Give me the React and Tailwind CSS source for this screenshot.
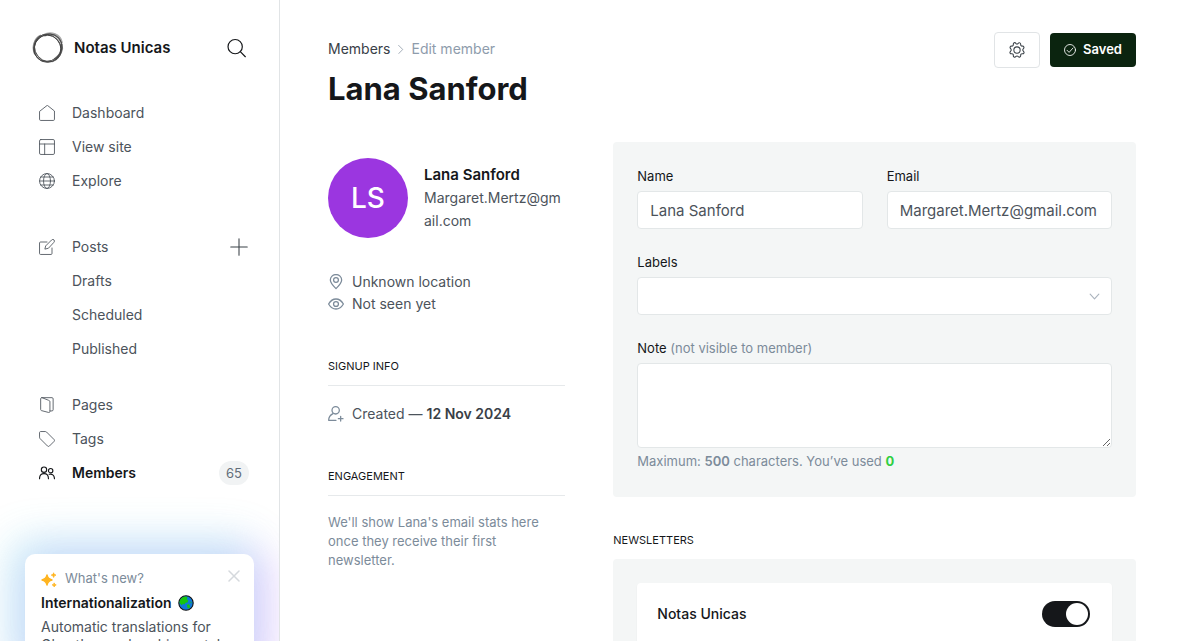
import React from "react";

function Icon({ children, className, width = 1.5 }) {
  return (
    <svg
      viewBox="0 0 24 24"
      fill="none"
      stroke="currentColor"
      strokeWidth={width}
      strokeLinecap="round"
      strokeLinejoin="round"
      aria-hidden="true"
      className={className}
    >
      {children}
    </svg>
  );
}

const icons = {
  home: <path d="M12 .8 .8 9.6v11.9c0 1 .7 1.7 1.7 1.7h19c1 0 1.7-.7 1.7-1.7V9.6z" />,
  layout: (
    <>
      <rect x=".8" y=".8" width="22.4" height="22.4" rx="2" />
      <path d="M.8 7.5h22.4M8.5 7.5v15.7" />
    </>
  ),
  globe: (
    <>
      <circle cx="12" cy="12" r="11.2" />
      <ellipse cx="12" cy="12" rx="5.2" ry="11.2" />
      <path d="M.8 12h22.4M2.6 6h18.8M2.6 18h18.8" />
    </>
  ),
  edit: (
    <>
      <path d="M12 4.5H2.3C1.4 4.5.8 5.1.8 6v15.7c0 .9.6 1.5 1.5 1.5H18c.9 0 1.5-.6 1.5-1.5V13.5" />
      <path d="m13.6 14-4.8 1.2 1.2-4.8 9-9a2.4 2.4 0 0 1 3.5 3.5z" />
    </>
  ),
  pages: (
    <>
      <path d="M4 1h15.5c1 0 1.7.7 1.7 1.7v16.5c0 1-.7 1.7-1.7 1.7h-3" />
      <path d="M4 1C3 1 2.5 1.7 2.5 2.6v16.2c0 .8.4 1.3 1.2 1.6l10.7 2.8c1.2.3 2-.3 2-1.4V7c0-.9-.5-1.5-1.3-1.8z" />
    </>
  ),
  tag: <path d="M.8 2.3C.8 1.4 1.4.8 2.3.8h7.2c.7 0 1.3.3 1.8.7l11.3 11.3c.8.8.8 2 0 2.8l-7 7c-.8.8-2 .8-2.8 0L1.5 11.3a2.5 2.5 0 0 1-.7-1.8z" />,
  members: (
    <>
      <circle cx="7.5" cy="7" r="4" />
      <path d="M.8 20.5c0-4.5 2.8-7.5 6.7-7.5s6.7 3 6.7 7.5" />
      <circle cx="17.5" cy="8.5" r="3.3" />
      <path d="M15.2 14c4.2-1.3 8 1.5 8 6.5" />
    </>
  ),
};

function NavItem({ icon, label, active, children }) {
  return (
    <li className="flex h-[34px] items-center justify-between">
      <a
        href="#"
        className={
          active
            ? "flex items-center gap-[17px] text-sm font-semibold text-[#15171a]"
            : "flex items-center gap-[17px] text-sm text-[#4c535b]"
        }
      >
        <span className="size-4">
          {icon && <Icon className="size-4" width={active ? 1.7 : 1.3}>{icons[icon]}</Icon>}
        </span>
        {label}
      </a>
      {children}
    </li>
  );
}

function Logo() {
  return (
    <svg viewBox="0 0 32 32" fill="none" stroke="#444" className="size-8" aria-hidden="true">
      <path d="M12 3.500C19-.5 28 3 29.500 11" stroke="#aaa" strokeWidth="3" />
      <path d="M29.500 12c1.500 6-1.500 12-7 15.500" stroke="#888" strokeWidth="2.500" />
      <path d="M3 22C0 15 2 7 9 3.500" stroke="#888" strokeWidth="2" />
      <circle cx="15.300" cy="16.700" r="13.600" strokeWidth="1" />
      <ellipse cx="16.200" cy="15.800" rx="14.600" ry="13" strokeWidth=".9" transform="rotate(-40 16 16)" />
      <ellipse cx="16" cy="16.300" rx="14.500" ry="12.600" strokeWidth=".8" transform="rotate(50 16 16)" />
      <ellipse cx="16.300" cy="15.600" rx="13.800" ry="14" strokeWidth=".5" />
    </svg>
  );
}

function Globe() {
  return (
    <svg viewBox="0 0 16 16" className="size-4" role="img" aria-label="Globe">
      <circle cx="8" cy="8" r="7.200" fill="#0f78d8" stroke="#111" strokeWidth="1.100" />
      <path d="M1.500 8C1.500 4.500 4 1.700 8 1.600l1.500 1-.8 1.600 1.600 1.300-.8 2-2 .2-.9 1.800-1.700-.7-1 1.400z" fill="#16c60c" />
      <path d="m8.800 9.800 2-.6 1.400 1.900-.8 2.300-1.900-.4zM12 6.200l1.700 1.400-.7 1z" fill="#16c60c" />
    </svg>
  );
}

function Sidebar() {
  return (
    <aside className="flex w-[280px] shrink-0 flex-col overflow-hidden border-r border-[#e1e4e6]">
      <div className="flex items-center pt-8 pr-[31px] pl-8">
        <Logo />
        <a href="#" className="ml-[10px] text-[15px] leading-8 font-semibold text-[#15171a]">
          Notas Unicas
        </a>
        <button type="button" aria-label="Search" className="ml-auto text-[#15171a]">
          <Icon className="size-[22px]" width={1.3}>
            <circle cx="10" cy="10.500" r="7.800" />
            <path d="m15.600 16 5.500 5.500" />
          </Icon>
        </button>
      </div>
      <nav className="mt-8 flex flex-col pr-[31px] pl-[39px]">
        <ul>
          <NavItem icon="home" label="Dashboard" />
          <NavItem icon="layout" label="View site" />
          <NavItem icon="globe" label="Explore" />
        </ul>
        <ul className="mt-8">
          <NavItem icon="edit" label="Posts">
            <button type="button" aria-label="New post" className="text-[#394047]">
              <Icon className="size-[18px]" width={1.4}>
                <path d="M12 1v22M1 12h22" />
              </Icon>
            </button>
          </NavItem>
          <NavItem label="Drafts" />
          <NavItem label="Scheduled" />
          <NavItem label="Published" />
        </ul>
        <ul className="mt-[22px]">
          <NavItem icon="pages" label="Pages" />
          <NavItem icon="tag" label="Tags" />
          <NavItem icon="members" label="Members" active>
            <span className="-mr-px rounded-full bg-[#f1f3f4] px-[7px] text-[13px] leading-6 text-[#626d79]">65</span>
          </NavItem>
        </ul>
      </nav>
      <section className="mx-[25px] mt-16 shrink-0 rounded-[10px] bg-white py-4 pr-3.5 pl-4 text-sm shadow-[-7px_-6px_42px_8px_rgb(75_225_226/28%),7px_6px_42px_8px_rgb(202_103_255/32%)]">
        <div className="flex h-4 items-center text-[13px] text-[#7c8b9a]">
          <svg viewBox="0 0 16 16" fill="#ffb41f" stroke="#ffb41f" strokeLinejoin="round" className="mt-1 mr-2 size-4" aria-hidden="true">
            <path d="M6 3c.7 3.300 1.900 4.300 5 5-3.100.7-4.300 1.900-5 5-.7-3.100-1.900-4.300-5-5 3.100-.7 4.300-1.700 5-5z" strokeWidth="1.400" />
            <path d="M12.600.8c.4 1.500.9 2 2.300 2.300-1.400.4-1.900.9-2.300 2.300-.4-1.400-.9-1.900-2.300-2.300 1.400-.3 1.900-.8 2.300-2.300zM13.200 10.900c.3 1.300.8 1.700 2 2-1.200.3-1.700.8-2 2-.3-1.200-.8-1.700-2-2 1.200-.3 1.700-.7 2-2z" strokeWidth=".9" />
          </svg>
          <span className="pt-px">What's new?</span>
          <button type="button" aria-label="Close" className="ml-auto self-start text-[#d5d9dd]">
            <Icon className="size-3" width={3}>
              <path d="m2 2 20 20M22 2 2 22" />
            </Icon>
          </button>
        </div>
        <h2 className="mt-[5px] flex items-center gap-1.5 leading-6 font-semibold text-[#15171a]">
          Internationalization <Globe />
        </h2>
        <p className="mt-[3px] leading-[18px] text-[#4c535b]">
          Automatic translations for Ghost's membership portal
        </p>
      </section>
    </aside>
  );
}

function SectionTitle({ children }) {
  return (
    <h3 className="border-b border-[#e6e9eb] pb-[9px] text-[11px] leading-5 font-normal text-[#15171a] uppercase">
      {children}
    </h3>
  );
}

function MetaLine({ icon, children }) {
  return (
    <p className="flex items-center gap-2 text-sm leading-[22px] text-[#4c535b]">
      <Icon className="size-4 text-[#7c8b9a]" width={1.9}>{icon}</Icon>
      <span>{children}</span>
    </p>
  );
}

function Profile() {
  return (
    <div className="pt-4">
      <div className="flex items-center gap-4">
        <div className="flex size-20 shrink-0 items-center justify-center rounded-full bg-[#9b36e0] text-[28px] font-medium text-white">
          LS
        </div>
        <div className="min-w-0">
          <h2 className="text-[15px] leading-[22px] font-semibold text-[#15171a]">Lana Sanford</h2>
          <p className="text-sm leading-[23px] break-all text-[#4c535b]">Margaret.Mertz@gmail.com</p>
        </div>
      </div>
      <div className="mt-[33px]">
        <MetaLine
          icon={
            <>
              <path d="M12 22C7 17 3.500 13 3.500 9a8.500 8.200 0 0 1 17 0C20.500 13 17 17 12 22z" />
              <circle cx="12" cy="9" r="3.600" />
            </>
          }
        >
          Unknown location
        </MetaLine>
        <MetaLine
          icon={
            <>
              <path d="M.9 12C3.500 7.500 7.500 4.500 12 4.500S20.500 7.500 23.100 12C20.500 16.500 16.500 19.500 12 19.500S3.500 16.500.9 12z" />
              <circle cx="12" cy="12" r="3.700" />
            </>
          }
        >
          Not seen yet
        </MetaLine>
      </div>
      <section className="mt-[41px]">
        <SectionTitle>Signup info</SectionTitle>
        <div className="mt-[17px]">
          <MetaLine
            icon={
              <>
                <circle cx="11.500" cy="6.500" r="5.500" />
                <path d="M7.500 11.500C3.500 13.500 1 16.500 1 21.500H12M19 15.500v7M15.500 19h7" />
              </>
            }
          >
            Created — <strong className="font-semibold text-[#394047]">12 Nov 2024</strong>
          </MetaLine>
        </div>
      </section>
      <section className="mt-[41px]">
        <SectionTitle>Engagement</SectionTitle>
        <p className="mt-[17px] text-[13px] leading-[19px] text-[#7c8b9a]">
          We'll show Lana's email stats here once they receive their first newsletter.
        </p>
      </section>
    </div>
  );
}

const labelClass = "mb-[5px] block text-[13px] leading-5 text-[#15171a]";
const fieldClass =
  "block h-[38px] w-full appearance-none rounded border border-[#e3e7e8] bg-white px-3 text-[15px] text-[#4c535b] outline-none";

function MemberForm() {
  return (
    <form className="flex flex-col gap-[23px] rounded-sm bg-[#f4f6f6] px-6 pt-6 pb-[26px]">
      <div className="grid grid-cols-2 gap-6">
        <div>
          <label htmlFor="name" className={labelClass}>Name</label>
          <input id="name" type="text" defaultValue="Lana Sanford" className={fieldClass} />
        </div>
        <div>
          <label htmlFor="email" className={labelClass}>Email</label>
          <input id="email" type="email" defaultValue="Margaret.Mertz@gmail.com" className={fieldClass} />
        </div>
      </div>
      <div>
        <label htmlFor="labels" className={labelClass}>Labels</label>
        <div className="relative">
          <select id="labels" className={fieldClass}>
            <option value="" />
          </select>
          <Icon className="pointer-events-none absolute top-[14px] right-3 size-[11px] text-[#abb4be]" width={2.5}>
            <path d="m2.500 7 9.500 10 9.500-10" />
          </Icon>
        </div>
      </div>
      <div>
        <label htmlFor="note" className={labelClass}>
          Note <span className="text-[#7c8b9a]">(not visible to member)</span>
        </label>
        <textarea
          id="note"
          className="block h-[85px] w-full resize-y rounded border border-[#e3e7e8] bg-white px-3 py-2 text-[15px] text-[#4c535b] outline-none"
        />
        <p className="mt-[3px] text-[13px] leading-5 text-[#7c8b9a]">
          Maximum: <b className="font-semibold">500</b> characters. You’ve used{" "}
          <span className="font-bold text-[#30cf43]">0</span>
        </p>
      </div>
    </form>
  );
}

function Newsletters() {
  return (
    <section className="mt-[33px]">
      <h3 className="text-[11px] leading-5 font-normal text-[#15171a] uppercase">Newsletters</h3>
      <div className="mt-[9px] rounded-sm bg-[#f4f6f6] p-6">
        <label className="flex items-center justify-between rounded-sm bg-white py-[18px] pr-[22px] pl-5 text-sm font-medium text-[#15171a] shadow-xs">
          Notas Unicas
          <input
            type="checkbox"
            role="switch"
            defaultChecked
            className="flex h-[26px] w-12 appearance-none items-center rounded-full bg-[#abb4be] p-0.5 before:size-[22px] before:rounded-full before:bg-white checked:justify-end checked:bg-[#15171a]"
          />
        </label>
      </div>
    </section>
  );
}

export default function App() {
  return (
    <div className="flex h-screen overflow-hidden bg-white font-['Inter','Liberation_Sans',sans-serif]">
      <Sidebar />
      <main className="min-w-0 flex-1 overflow-hidden px-12 pt-8">
        <header className="flex items-start justify-between">
          <div className="pt-[7px]">
            <div className="flex items-center text-sm leading-5">
              <a href="#" className="text-[#394047]">Members</a>
              <Icon className="mx-1.5 size-[9px] text-[#95a1ad]" width={2.3}>
                <path d="m7 1 11 11L7 23" />
              </Icon>
              <span className="text-[#8e9cac]">Edit member</span>
            </div>
            <h1 className="mt-2.5 text-[31px] leading-10 font-bold text-[#15171a]">Lana Sanford</h1>
          </div>
          <div className="flex items-center gap-2.5">
            <button
              type="button"
              aria-label="Member actions"
              className="flex h-9 w-[46px] items-center justify-center rounded border border-[#e1e4e6] text-[#394047]"
            >
              <Icon className="size-[18px]" width={1.4}>
                <path d="m10.300 2.900.4.500a1.800 1.800 0 0 0 2.600 0l.5-.5a1.800 1.800 0 0 1 3.100 1.300v.7a1.800 1.800 0 0 0 1.900 1.900h.6a1.800 1.800 0 0 1 1.300 3.100l-.4.700a1.800 1.800 0 0 0 0 2.700l.4.600a1.800 1.800 0 0 1-1.300 3.200h-.6a1.800 1.800 0 0 0-1.900 1.900v.6a1.800 1.800 0 0 1-3.100 1.300l-.5-.4a1.800 1.800 0 0 0-2.600 0l-.4.400a1.800 1.800 0 0 1-3.200-1.300V19a1.800 1.800 0 0 0-1.900-1.900h-.6a1.800 1.800 0 0 1-1.300-3.200l.4-.6a1.800 1.800 0 0 0 0-2.700l-.4-.7a1.800 1.800 0 0 1 1.300-3.100h.6a1.800 1.800 0 0 0 1.900-1.900v-.7a1.800 1.800 0 0 1 3.200-1.300z" />
                <circle cx="12" cy="12" r="4.200" />
              </Icon>
            </button>
            <button
              type="button"
              className="flex h-[34px] items-center gap-[7px] rounded bg-[#0b240f] px-3.5 text-[13px] font-semibold text-white"
            >
              <Icon className="size-3" width={1.7}>
                <circle cx="12" cy="12" r="11" />
                <path d="m6 12.500 4.200 4.200L18 8" />
              </Icon>
              Saved
            </button>
          </div>
        </header>
        <div className="mt-[33px] grid grid-cols-3 gap-12">
          <Profile />
          <div className="col-span-2">
            <MemberForm />
            <Newsletters />
          </div>
        </div>
      </main>
    </div>
  );
}
